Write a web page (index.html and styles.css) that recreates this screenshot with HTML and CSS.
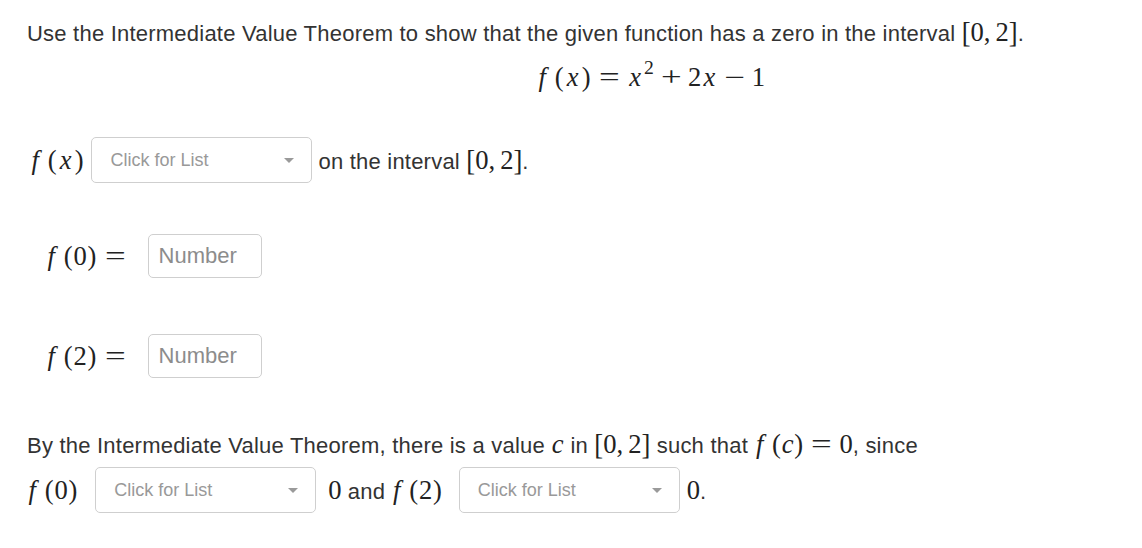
FILE: index.html
```html
<!DOCTYPE html>
<html>
<head>
<meta charset="utf-8">
<link rel="stylesheet" href="styles.css">
</head>
<body>
<div class="page">
  <p class="line intro">Use the Intermediate Value Theorem to show that the given function has a zero in the interval <span class="m"><span class="br">[</span>0<span class="cm">,</span>2<span class="br">]</span></span>.</p>
  <div class="display"><span class="m"><i class="f">f</i><span class="p">(</span><i class="x">x</i><span class="p">)</span><span class="rel">=</span><i class="x">x</i><sup>2</sup><span class="op">+</span>2<i class="x">x</i><span class="op">−</span>1</span></div>

  <div class="row r1">
    <span class="m"><i class="f">f</i><span class="p">(</span><i class="x">x</i><span class="p">)</span></span>
    <div class="select s1"><span class="ph">Click for List</span><span class="caret"></span></div>
    <span class="after">on the interval <span class="m"><span class="br">[</span>0<span class="cm">,</span>2<span class="br">]</span></span>.</span>
  </div>

  <div class="row r2">
    <span class="m"><i class="f">f</i><span class="p">(</span>0<span class="p">)</span><span class="rel">=</span></span>
    <div class="num"><span class="ph2">Number</span></div>
  </div>

  <div class="row r3">
    <span class="m"><i class="f">f</i><span class="p">(</span>2<span class="p">)</span><span class="rel">=</span></span>
    <div class="num"><span class="ph2">Number</span></div>
  </div>

  <p class="line by">By the Intermediate Value Theorem, there is a value <span class="m"><i class="c">c</i></span> in <span class="m"><span class="br">[</span>0<span class="cm">,</span>2<span class="br">]</span></span> such that <span class="m"><i class="f">f</i><span class="p">(</span><i>c</i><span class="p">)</span><span class="rel">=</span>0</span>, since</p>

  <div class="row r4">
    <span class="m"><i class="f">f</i><span class="p">(</span>0<span class="p">)</span></span>
    <div class="select s2"><span class="ph">Click for List</span><span class="caret"></span></div>
    <span class="mid"><span class="m">0</span> and <span class="m"><i class="f">f</i><span class="p">(</span>2<span class="p">)</span></span></span>
    <div class="select s3"><span class="ph">Click for List</span><span class="caret"></span></div>
    <span class="end"><span class="m">0</span>.</span>
  </div>
</div>
</body>
</html>
```

FILE: styles.css
```css
html, body {
  margin: 0;
  padding: 0;
  background: #ffffff;
}

.page {
  padding: 14px 27px 0 27px;
  font-family: "Liberation Sans", Arial, sans-serif;
  font-size: 22px;
  letter-spacing: 0.22px;
  color: #333333;
}

.line {
  margin: 0;
  height: 36px;
  line-height: 36px;
  white-space: nowrap;
}

.m {
  font-family: "Liberation Serif", "Times New Roman", serif;
  font-size: 26.6px;
  letter-spacing: 0;
  color: #222222;
}

.m i {
  font-style: italic;
}

.f {
  display: inline-block;
  margin-left: 0.06em;
  margin-right: 0.3em;
}

.x {
  display: inline-block;
  margin: 0 0.09em;
}

.c {
  display: inline-block;
  margin: 0 0.02em;
}

.p {
  display: inline-block;
  margin: 0 0.03em;
}

.cm {
  margin-right: 0.19em;
}

.m sup {
  font-size: 0.74em;
  line-height: 0;
  vertical-align: 0.6em;
  margin-left: 0.03em;
}

.rel,
.op {
  display: inline-block;
  width: 0.778em;
  text-align: center;
  transform: scaleX(1.38);
}

.rel {
  margin: 0 0.2778em;
}

.op {
  margin: 0 0.25em;
}

.br {
  display: inline-block;
  transform: scaleY(1.12);
}

.display {
  margin-top: 8px;
  height: 38px;
  line-height: 38px;
  padding-left: 510px;
  white-space: nowrap;
}

.row {
  display: flex;
  align-items: center;
  white-space: nowrap;
}

.r1 {
  margin-top: 41px;
  padding-left: 3px;
}

.r2 {
  margin-top: 51px;
  padding-left: 19px;
}

.r3 {
  margin-top: 56px;
  padding-left: 19px;
}

.by {
  margin-top: 48px;
}

.r4 {
  margin-top: 5px;
}

.select {
  box-sizing: border-box;
  width: 221px;
  height: 46px;
  border: 1px solid #cfcfcf;
  border-radius: 5px;
  display: flex;
  align-items: center;
  justify-content: space-between;
  padding: 0 17px 0 18px;
  background: #ffffff;
}

.ph {
  font-size: 18px;
  letter-spacing: 0;
  color: #999999;
}

.caret {
  width: 0;
  height: 0;
  border-left: 5px solid transparent;
  border-right: 5px solid transparent;
  border-top: 5px solid #9a9a9a;
}

.s1 {
  margin-left: 7px;
}

.after {
  margin-left: 6px;
}

.num {
  box-sizing: border-box;
  width: 114px;
  height: 44px;
  border: 1px solid #cfcfcf;
  border-radius: 5px;
  display: flex;
  align-items: center;
  padding-left: 10px;
  margin-left: 15px;
}

.ph2 {
  font-size: 22px;
  letter-spacing: 0;
  color: #8c8c8c;
}

.s2 {
  margin-left: 17px;
}

.mid {
  margin-left: 12px;
}

.s3 {
  margin-left: 16px;
}

.end {
  margin-left: 7px;
}
```
